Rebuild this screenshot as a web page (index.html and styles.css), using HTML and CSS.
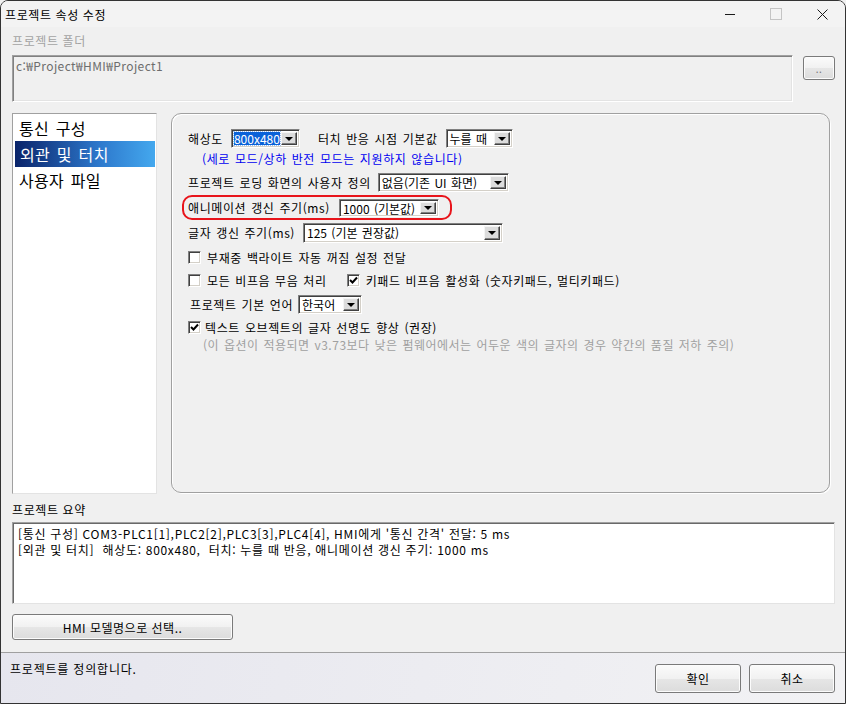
FILE: index.html
```html
<!DOCTYPE html>
<html lang="ko">
<head>
  <meta charset="UTF-8" />
  <title>프로젝트 속성 수정</title>
  <link rel="stylesheet" href="styles.css">
</head>
<body>
  <div class="window">
    <div class="titlebar">
      <span class="title">프로젝트 속성 수정</span>
      <div class="caption-btns">
        <span class="cap cap-min"></span>
        <span class="cap cap-max"></span>
        <span class="cap cap-close">
          <svg width="11" height="11" viewBox="0 0 11 11"><path d="M0.5 0.5 L10.5 10.5 M10.5 0.5 L0.5 10.5" stroke="#1a1a1a" stroke-width="1"/></svg>
        </span>
      </div>
    </div>

    <div class="content">
      <div class="folder-label">프로젝트 폴더</div>
      <div class="folder-row">
        <div class="folder-box">c:₩Project₩HMI₩Project1</div>
        <button class="btn btn-browse">..</button>
      </div>

      <div class="main">
        <ul class="pages">
          <li>통신 구성</li>
          <li class="active">외관 및 터치</li>
          <li>사용자 파일</li>
        </ul>

        <div class="group">
          <div class="row row-1">
            <span>해상도</span>
            <div class="combo combo-res"><span class="combo-text picked">800x480</span><span class="combo-btn"><i></i></span></div>
            <span class="touch-label">터치 반응 시점 기본값</span>
            <div class="combo combo-touch"><span class="combo-text">누를 때</span><span class="combo-btn"><i></i></span></div>
          </div>
          <div class="row row-note">
            <span class="note">(세로 모드/상하 반전 모드는 지원하지 않습니다)</span>
          </div>
          <div class="row row-3">
            <span>프로젝트 로딩 화면의 사용자 정의</span>
            <div class="combo combo-boot"><span class="combo-text">없음(기존 UI 화면)</span><span class="combo-btn"><i></i></span></div>
          </div>
          <div class="row row-4">
            <div class="highlight">
              <span>애니메이션 갱신 주기(ms)</span>
              <div class="combo combo-anim"><span class="combo-text">1000 (기본값)</span><span class="combo-btn"><i></i></span></div>
            </div>
          </div>
          <div class="row row-5">
            <span>글자 갱신 주기(ms)</span>
            <div class="combo combo-font"><span class="combo-text">125 (기본 권장값)</span><span class="combo-btn"><i></i></span></div>
          </div>
          <div class="row row-6">
            <span class="chk"></span>
            <span>부재중 백라이트 자동 꺼짐 설정 전달</span>
          </div>
          <div class="row row-7">
            <span class="chk"></span>
            <span>모든 비프음 무음 처리</span>
            <span class="chk checked keypad"><svg width="9" height="9" viewBox="0 0 9 9"><path d="M1 4 L3.5 6.5 L8 1.5" fill="none" stroke="#000" stroke-width="2"/></svg></span>
            <span>키패드 비프음 활성화 (숫자키패드, 멀티키패드)</span>
          </div>
          <div class="row row-8">
            <span class="lang-label">프로젝트 기본 언어</span>
            <div class="combo combo-lang"><span class="combo-text">한국어</span><span class="combo-btn"><i></i></span></div>
          </div>
          <div class="row row-9">
            <span class="chk checked"><svg width="9" height="9" viewBox="0 0 9 9"><path d="M1 4 L3.5 6.5 L8 1.5" fill="none" stroke="#000" stroke-width="2"/></svg></span>
            <span>텍스트 오브젝트의 글자 선명도 향상 (권장)</span>
          </div>
          <div class="row row-10">
            <span class="hint">(이 옵션이 적용되면 v3.73보다 낮은 펌웨어에서는 어두운 색의 글자의 경우 약간의 품질 저하 주의)</span>
          </div>
        </div>
      </div>

      <div class="summary-label">프로젝트 요약</div>
      <div class="summary">
        <div>[통신 구성] COM3-PLC1[1],PLC2[2],PLC3[3],PLC4[4], HMI에게 '통신 간격' 전달: 5 ms</div>
        <div>[외관 및 터치]&nbsp; 해상도: 800x480,&nbsp; 터치: 누를 때 반응, 애니메이션 갱신 주기: 1000 ms</div>
      </div>

      <button class="btn btn-model">HMI 모델명으로 선택..</button>
    </div>

    <div class="footer">
      <span class="status">프로젝트를 정의합니다.</span>
      <div class="footer-btns">
        <button class="btn btn-ok">확인</button>
        <button class="btn btn-cancel">취소</button>
      </div>
    </div>
  </div>
</body>
</html>
```

FILE: styles.css
```css
* {
  box-sizing: border-box;
}

body {
  margin: 0;
  padding: 0;
  background: #f0f0f0;
  font-family: "Noto Sans CJK KR", "Noto Sans", sans-serif;
  font-size: 12px;
  letter-spacing: 0.6px;
  color: #000;
}

.window {
  width: 846px;
  height: 704px;
  border: 1px solid #333;
  border-radius: 8px 8px 0 0;
  overflow: hidden;
  background: #f0f0f0;
  display: flex;
  flex-direction: column;
}

.titlebar {
  height: 26px;
  flex-shrink: 0;
  display: flex;
  align-items: center;
  padding-left: 4px;
  background: #f3f3f3;
}

.title {
  line-height: 15px;
}

.caption-btns {
  margin-left: auto;
  display: flex;
  align-items: center;
}

.cap {
  width: 46px;
  height: 26px;
  display: flex;
  align-items: center;
  justify-content: center;
}

.cap-min::before {
  content: "";
  width: 10px;
  height: 1px;
  background: #1a1a1a;
}

.cap-max::before {
  content: "";
  width: 10px;
  height: 10px;
  border: 1px solid #c4c4c4;
}

.content {
  padding: 0 10px 0 11px;
}

.folder-label {
  margin-top: 7px;
  height: 14px;
  line-height: 14px;
  color: #a3a3a3;
}

.folder-row {
  margin-top: 7px;
  display: flex;
  align-items: flex-start;
}

.folder-box {
  width: 781px;
  height: 47px;
  border: 1px solid;
  border-color: #a0a0a0 #fff #fff #a0a0a0;
  box-shadow: inset 1px 1px 0 #808080, inset -1px -1px 0 #e3e3e3;
  background: #f0f0f0;
  color: #6d6d6d;
  padding: 2px 3px;
  line-height: 15px;
  letter-spacing: 0.4px;
}

.btn {
  font-family: inherit;
  font-size: 12px;
  letter-spacing: 0.5px;
  color: #000;
  border: 1px solid #7a7a7a;
  border-radius: 3px;
  background: linear-gradient(#fbfbfb, #f1f1f1 50%, #e6e6e6 51%, #dcdcdc);
  box-shadow: inset 0 0 0 1px #fcfcfc;
  padding: 0;
}

.btn-browse {
  margin-left: 10px;
  margin-top: 1px;
  width: 32px;
  height: 24px;
  color: #777;
  font-size: 10px;
  line-height: 24px;
}

.main {
  margin-top: 11px;
  height: 381px;
  display: flex;
}

.pages {
  list-style: none;
  margin: 0;
  padding: 1px 1px 0 1px;
  width: 145px;
  height: 381px;
  background: #fff;
  border: 1px solid;
  border-color: #a0a0a0 #e3e3e3 #e3e3e3 #a0a0a0;
}

.pages li {
  height: 26px;
  line-height: 26px;
  font-size: 16px;
  letter-spacing: 0.3px;
  padding-left: 5px;
  word-spacing: 2px;
}

.pages li.active {
  margin-left: 1px;
  color: #fff;
  background: linear-gradient(to right, #0a246a, #2d78cc 60%, #44a8ee);
}

.group {
  margin-left: 14px;
  width: 659px;
  height: 380px;
  border: 1px solid #a0a0a0;
  border-radius: 10px;
  box-shadow: inset 1px 1px 0 #fff, 1px 1px 0 #fff;
  padding: 15px 0 0 16px;
}

.row {
  display: flex;
  align-items: center;
  line-height: 15px;
  word-spacing: 1px;
  white-space: nowrap;
}

.row-1 { height: 19px; }
.row-note { height: 21px; }
.row-3 { height: 26px; }
.row-4 { height: 25px; }
.row-5 { height: 25px; }
.row-6 { height: 25px; }
.row-7 { height: 21px; }
.row-8 { height: 26px; }
.row-9 { height: 20px; }
.row-10 { height: 14px; }

.row > span + .combo,
.highlight > span + .combo {
  margin-left: 8px;
}

.touch-label {
  margin-left: 18px;
}

.note {
  margin-left: 14px;
  color: #0000f0;
}

.hint {
  margin-left: 15px;
  color: #a0a0a0;
  letter-spacing: 0.5px;
}

.lang-label {
  margin-left: 2px;
}

.highlight {
  display: flex;
  align-items: center;
  height: 25px;
  margin-left: -6px;
  padding: 0 11px 0 4px;
  border: 2px solid #e8141b;
  border-radius: 10px;
}

.combo {
  display: flex;
  flex-shrink: 0;
  height: 19px;
  padding: 2px;
  background: #fff;
  border: 1px solid;
  border-color: #808080 #fff #fff #808080;
  box-shadow: inset 1px 1px 0 #404040, inset -1px -1px 0 #d4d0c8;
}

.combo-text {
  flex: 1;
  padding-left: 1px;
  line-height: 14px;
  letter-spacing: 0;
  white-space: nowrap;
}

.combo-text.picked {
  padding-left: 0;
  background: #0a62d8;
  color: #fff;
  outline: 1px dotted #9cc0f0;
  margin-right: 1px;
}

.combo-btn {
  width: 16px;
  flex-shrink: 0;
  display: flex;
  align-items: center;
  justify-content: center;
  background: #dcdcdc;
  border: 1px solid;
  border-color: #f4f4f4 #404040 #404040 #f4f4f4;
  box-shadow: inset -1px -1px 0 #808080;
}

.combo-btn i {
  width: 0;
  height: 0;
  border-left: 4px solid transparent;
  border-right: 4px solid transparent;
  border-top: 4px solid #000;
  margin-top: 1px;
}

.combo-res { width: 69px; }
.combo-touch { width: 67px; margin-left: 7px; }
.row > span + .combo-boot { width: 131px; margin-left: 7px; }
.highlight > span + .combo-anim { width: 100px; height: 18px; margin-left: 9px; }
.combo-font { width: 200px; height: 20px; }
.row > span + .combo-lang { width: 64px; margin-left: 5px; }

.chk {
  width: 13px;
  height: 13px;
  flex-shrink: 0;
  margin-right: 6px;
  background: #fff;
  border: 1px solid;
  border-color: #808080 #fff #fff #808080;
  box-shadow: inset 1px 1px 0 #404040, inset -1px -1px 0 #d4d0c8;
  display: flex;
  align-items: center;
  justify-content: center;
}

.row-9 .chk {
  margin-right: 4px;
}

.keypad {
  margin-left: 20px;
}

.summary-label {
  margin-top: 9px;
  height: 14px;
  line-height: 14px;
}

.summary {
  margin-top: 5px;
  width: 823px;
  height: 82px;
  background: #fff;
  border: 1px solid;
  border-color: #a0a0a0 #e3e3e3 #e3e3e3 #a0a0a0;
  box-shadow: inset 1px 1px 0 #696969;
  padding: 3px 5px;
  line-height: 16px;
  letter-spacing: 0.7px;
}

.btn-model {
  display: block;
  margin-top: 10px;
  width: 221px;
  height: 26px;
}

.footer {
  margin-top: auto;
  height: 51px;
  flex-shrink: 0;
  display: flex;
  align-items: flex-start;
  border-top: 1px solid #a0a0a0;
  background: linear-gradient(100deg, #e6e6ee, #ececf1 50%, #f2f2f4);
  padding: 9px 10px 0 9px;
}

.status {
  line-height: 14px;
  letter-spacing: 0.8px;
}

.footer-btns {
  margin-left: auto;
  margin-top: 2px;
  display: flex;
  gap: 8px;
}

.btn-ok,
.btn-cancel {
  width: 86px;
  height: 29px;
}
```
